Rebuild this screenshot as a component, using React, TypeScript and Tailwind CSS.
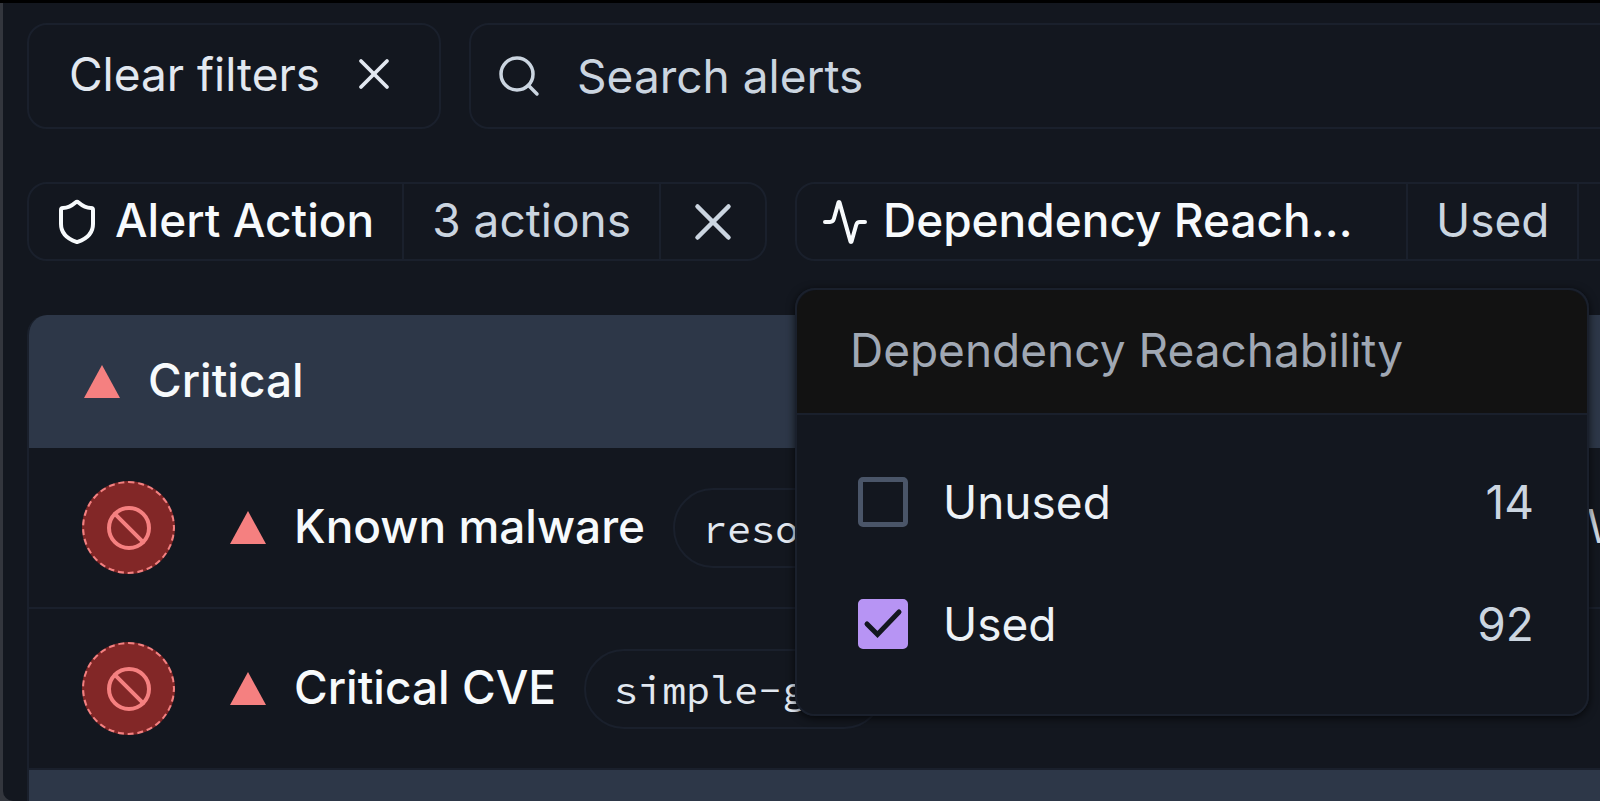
import { useState } from "react";
import { Activity, Ban, Search, Shield, X } from "lucide-react";

const alerts = [
  { name: "Known malware", pkg: "resolve-kit", note: "W" },
  { name: "Critical CVE", pkg: "simple-git", note: "" },
];

const options = [
  { id: "unused", label: "Unused", count: 14 },
  { id: "used", label: "Used", count: 92 },
];

function Triangle() {
  return (
    <svg viewBox="0 0 36 33" className="h-[33px] w-9 shrink-0 fill-[#f58080]" aria-hidden="true">
      <path d="M18 0 36 33H0Z" />
    </svg>
  );
}

function GroupHeader({ title }: { title: string }) {
  return (
    <h2 className="flex h-[133px] items-center gap-7 bg-[#2d3748] px-[55px] font-medium text-[#f7fafc]">
      <Triangle />
      <span className="pb-1">{title}</span>
    </h2>
  );
}

function AlertRow({ name, pkg, note }: { name: string; pkg: string; note: string }) {
  return (
    <li className="flex h-[161px] items-center border-b-2 border-[#1a202c] pl-[53px]">
      <div className="flex w-[1505px] shrink-0 items-center">
        <span className="mr-[55px] flex size-[93px] items-center justify-center rounded-full border-2 border-dashed border-[#f58080] bg-[#822727]">
          <Ban size={48} className="text-[#f58080]" />
        </span>
        <Triangle />
        <span className="ml-7 pb-1 font-medium text-[#f7fafc]">{name}</span>
        <code className="ml-7 flex h-20 items-center rounded-full border-2 border-[#1a202c] px-7 pt-0.5 font-['Source_Code_Pro','Noto_Sans_Mono_CJK_SC','Liberation_Mono',monospace] text-[40px] text-[#e2e8f0]">
          {pkg}
        </code>
      </div>
      <span className="pb-1 text-[#cbd5e0]">{note}</span>
    </li>
  );
}

function ReachabilityMenu() {
  const [checked, setChecked] = useState<string[]>(["used"]);
  const toggle = (id: string) =>
    setChecked((now) => (now.includes(id) ? now.filter((x) => x !== id) : [...now, id]));

  return (
    <fieldset className="absolute top-[104px] -left-0.5 z-10 w-[794px] overflow-hidden rounded-[20px] border-2 border-[#1a202c] bg-[#13171f] shadow-[0_2px_8px_rgba(0,0,0,0.7)]">
      <div className="flex h-[125px] items-center border-b-2 border-[#1a202c] bg-[#121212] px-[53px] pb-1 text-[#a0a8b4]">
        Dependency Reachability
      </div>
      <div className="pt-[26px] pb-[29px]">
        {options.map((o) => (
          <label key={o.id} className="flex h-[122px] items-center px-[53px] text-[#edf2f7]">
            <span className="relative mr-[35px] ml-2 size-[50px]">
              <input
                type="checkbox"
                checked={checked.includes(o.id)}
                onChange={() => toggle(o.id)}
                className="block size-[50px] appearance-none rounded-[5px] border-[5px] border-[#4a5568] checked:border-[#b794f4] checked:bg-[#b794f4]"
              />
              {checked.includes(o.id) && (
                <svg viewBox="0 0 50 50" className="pointer-events-none absolute inset-0 size-[50px]" aria-hidden="true">
                  <path d="M9 25 19.500 35.500 41 13" fill="none" stroke="#13171f" strokeWidth="5" strokeLinecap="round" />
                </svg>
              )}
            </span>
            <span className="flex-1">{o.label}</span>
            <span className="text-[#cbd5e0]">{o.count}</span>
          </label>
        ))}
      </div>
    </fieldset>
  );
}

export default function App() {
  return (
    <div className="h-screen overflow-hidden border-t-[3px] border-black bg-[#33363d] pl-[3px]">
      <main className="h-full overflow-hidden rounded-bl-[10px] bg-[#13171f] pt-5 pl-6 font-['Inter',sans-serif] text-[46px] leading-[60px] whitespace-nowrap">
        <div className="flex gap-7">
          <button
            type="button"
            className="flex h-[106px] shrink-0 items-center gap-7 rounded-[20px] border-2 border-[#1a202c] pr-[39px] pb-1 pl-10 text-[#e2e8f0]"
          >
            Clear filters
            <X size={52} strokeWidth={1.75} />
          </button>
          <label className="-mr-6 flex h-[106px] flex-1 items-center gap-[34px] rounded-[20px] border-2 border-[#1a202c] pl-6 text-[#cbd5e0]">
            <Search size={48} strokeWidth={1.75} className="shrink-0" />
            <input
              type="search"
              aria-label="Search alerts"
              placeholder="Search alerts"
              className="min-w-0 flex-1 bg-transparent outline-none placeholder:text-[#cbd5e0]"
            />
          </label>
        </div>

        <div className="mt-[53px] flex gap-7">
          <div className="flex h-[79px] shrink-0 items-stretch divide-x-2 divide-[#1a202c] rounded-[20px] border-2 border-[#1a202c]">
            <span className="flex items-center gap-3.5 pr-7 pl-6 font-medium text-[#f7fafc]">
              <Shield size={48} />
              <span className="pb-1">Alert Action</span>
            </span>
            <button type="button" className="px-7 pb-1 text-[#cbd5e0]">
              3 actions
            </button>
            <button type="button" aria-label="Remove alert action filter" className="px-[21px] text-[#cbd5e0]">
              <X size={62} strokeWidth={1.75} />
            </button>
          </div>

          <div className="relative flex h-[79px] shrink-0 items-stretch divide-x-2 divide-[#1a202c] rounded-[20px] border-2 border-[#1a202c]">
            <span
              title="Dependency Reachability"
              className="flex w-[611px] items-center gap-3.5 pl-6 font-medium text-[#f7fafc]"
            >
              <Activity size={48} className="shrink-0" />
              <span className="pb-1">Dependency Reach…</span>
            </span>
            <button type="button" className="px-7 pb-1 text-[#cbd5e0]">
              Used
            </button>
            <button type="button" aria-label="Remove reachability filter" className="px-[21px] text-[#cbd5e0]">
              <X size={62} strokeWidth={1.75} />
            </button>
            <ReachabilityMenu />
          </div>
        </div>

        <section className="mt-[54px] overflow-hidden rounded-tl-[20px] border-l-2 border-[#1a202c]">
          <GroupHeader title="Critical" />
          <ul>
            {alerts.map((a) => (
              <AlertRow key={a.name} {...a} />
            ))}
          </ul>
          <div className="h-[133px] bg-[#2d3748]" />
        </section>
      </main>
    </div>
  );
}
